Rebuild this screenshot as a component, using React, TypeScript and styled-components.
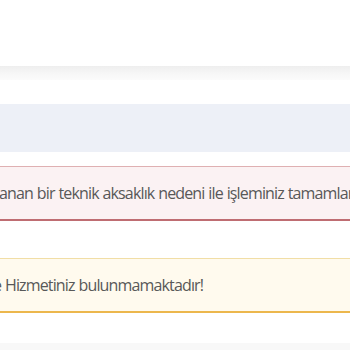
import React from "react";
import styled, { createGlobalStyle } from "styled-components";

const GlobalStyle = createGlobalStyle`
  html, body { margin: 0; padding: 0; background: #ffffff; }
  body { font-family: "Open Sans", "Noto Sans", sans-serif; overflow: hidden; }
`;

const Page = styled.div`
  width: 350px;
  height: 350px;
  display: flex;
  flex-direction: column;
  overflow: hidden;
  background: #ffffff;
`;

const HeaderShadow = styled.div`
  margin-top: 66px;
  height: 14px;
  background: linear-gradient(to bottom, #eeeeee, #f6f6f6 50%, #fbfbfb);
`;

const InfoBand = styled.div`
  margin-top: 24px;
  height: 48px;
  background: #edf0f7;
`;

type Tone = "danger" | "warning";

const tones = {
  danger: { bg: "#fbf2f3", top: "#dfb0b2", bottom: "#bf6d72" },
  warning: { bg: "#fffaee", top: "#f1dea6", bottom: "#ecb74d" },
};

const Alert = styled.div<{ $tone: Tone; $gap: number }>`
  margin-top: ${(p) => p.$gap}px;
  box-sizing: border-box;
  height: 55px;
  display: flex;
  align-items: center;
  background: ${(p) => tones[p.$tone].bg};
  border-top: 1px solid ${(p) => tones[p.$tone].top};
  border-bottom: 2px solid ${(p) => tones[p.$tone].bottom};
  overflow: hidden;
`;

const AlertText = styled.p<{ $indent: number }>`
  margin: 0;
  flex: none;
  white-space: nowrap;
  font-size: 16px;
  letter-spacing: -0.85px;
  word-spacing: 0.5px;
  line-height: 24px;
  color: #585858;
  text-indent: ${(p) => p.$indent}px;
`;

const FooterBand = styled.div`
  margin-top: 30px;
  flex: 1;
  background: #f8f8f8;
`;

export default function App() {
  return (
    <>
      <GlobalStyle />
      <Page>
        <HeaderShadow />
        <InfoBand />
        <Alert $tone="danger" $gap={14}>
          <AlertText $indent={-1}>
            anan bir teknik aksaklık nedeni ile işleminiz tamamlanamamıştır.
          </AlertText>
        </Alert>
        <Alert $tone="warning" $gap={37}>
          <AlertText $indent={-7}>e Hizmetiniz bulunmamaktadır!</AlertText>
        </Alert>
        <FooterBand />
      </Page>
    </>
  );
}
